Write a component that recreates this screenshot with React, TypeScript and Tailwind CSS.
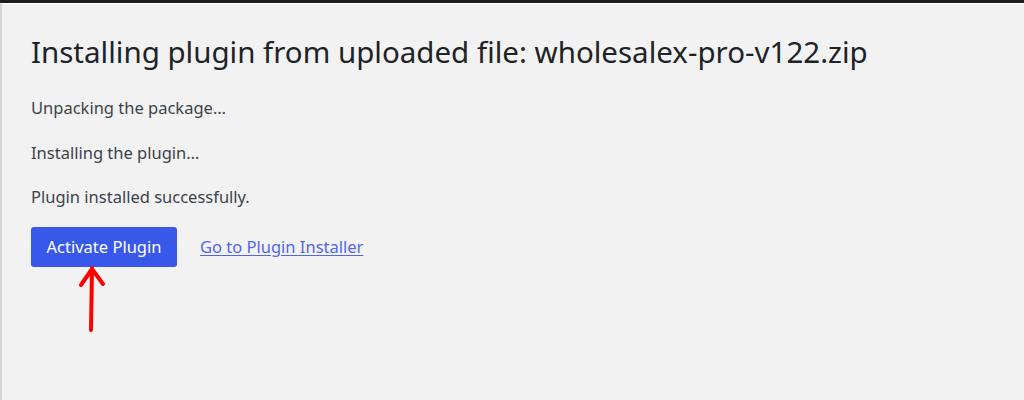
export default function App() {
  return (
    <div
      className="h-[400px] w-full overflow-hidden bg-[#1e1e1e] pt-[3px]"
      style={{ fontFamily: '"Noto Sans", "Open Sans", sans-serif' }}
    >
      <div className="h-full border-t border-l-2 border-t-white border-l-[#d6d6d6] bg-[#f2f2f2] pl-[29px] pt-[24px] text-[#3c434a]">
        <h1 className="text-[29.5px] leading-[48px] font-normal text-[#1d2327]">
          Installing plugin from uploaded file: wholesalex-pro-v122.zip
        </h1>
        <div className="mt-[21px] flex flex-col gap-[22.5px] text-[16.5px] leading-[22px]">
          <p>Unpacking the package…</p>
          <p>Installing the plugin…</p>
          <p>Plugin installed successfully.</p>
        </div>
        <div className="mt-[19px] flex items-center gap-[23px]">
          <button
            type="button"
            className="flex h-[40px] w-[146px] items-center justify-center rounded-[3px] bg-[#3858e9] text-[16.5px] text-white"
          >
            Activate Plugin
          </button>
          <a href="#" className="text-[16.5px] text-[#5466e8] underline underline-offset-2">
            Go to Plugin Installer
          </a>
        </div>
        <svg width="40" height="70" viewBox="0 0 40 70" className="ml-[41px] mt-[-1px]">
          <path
            d="M20 2 L19 64 M9 19 L20 3 L31 18"
            stroke="#ff0000"
            strokeWidth="4"
            strokeLinecap="round"
            strokeLinejoin="round"
            fill="none"
          />
        </svg>
      </div>
    </div>
  );
}
